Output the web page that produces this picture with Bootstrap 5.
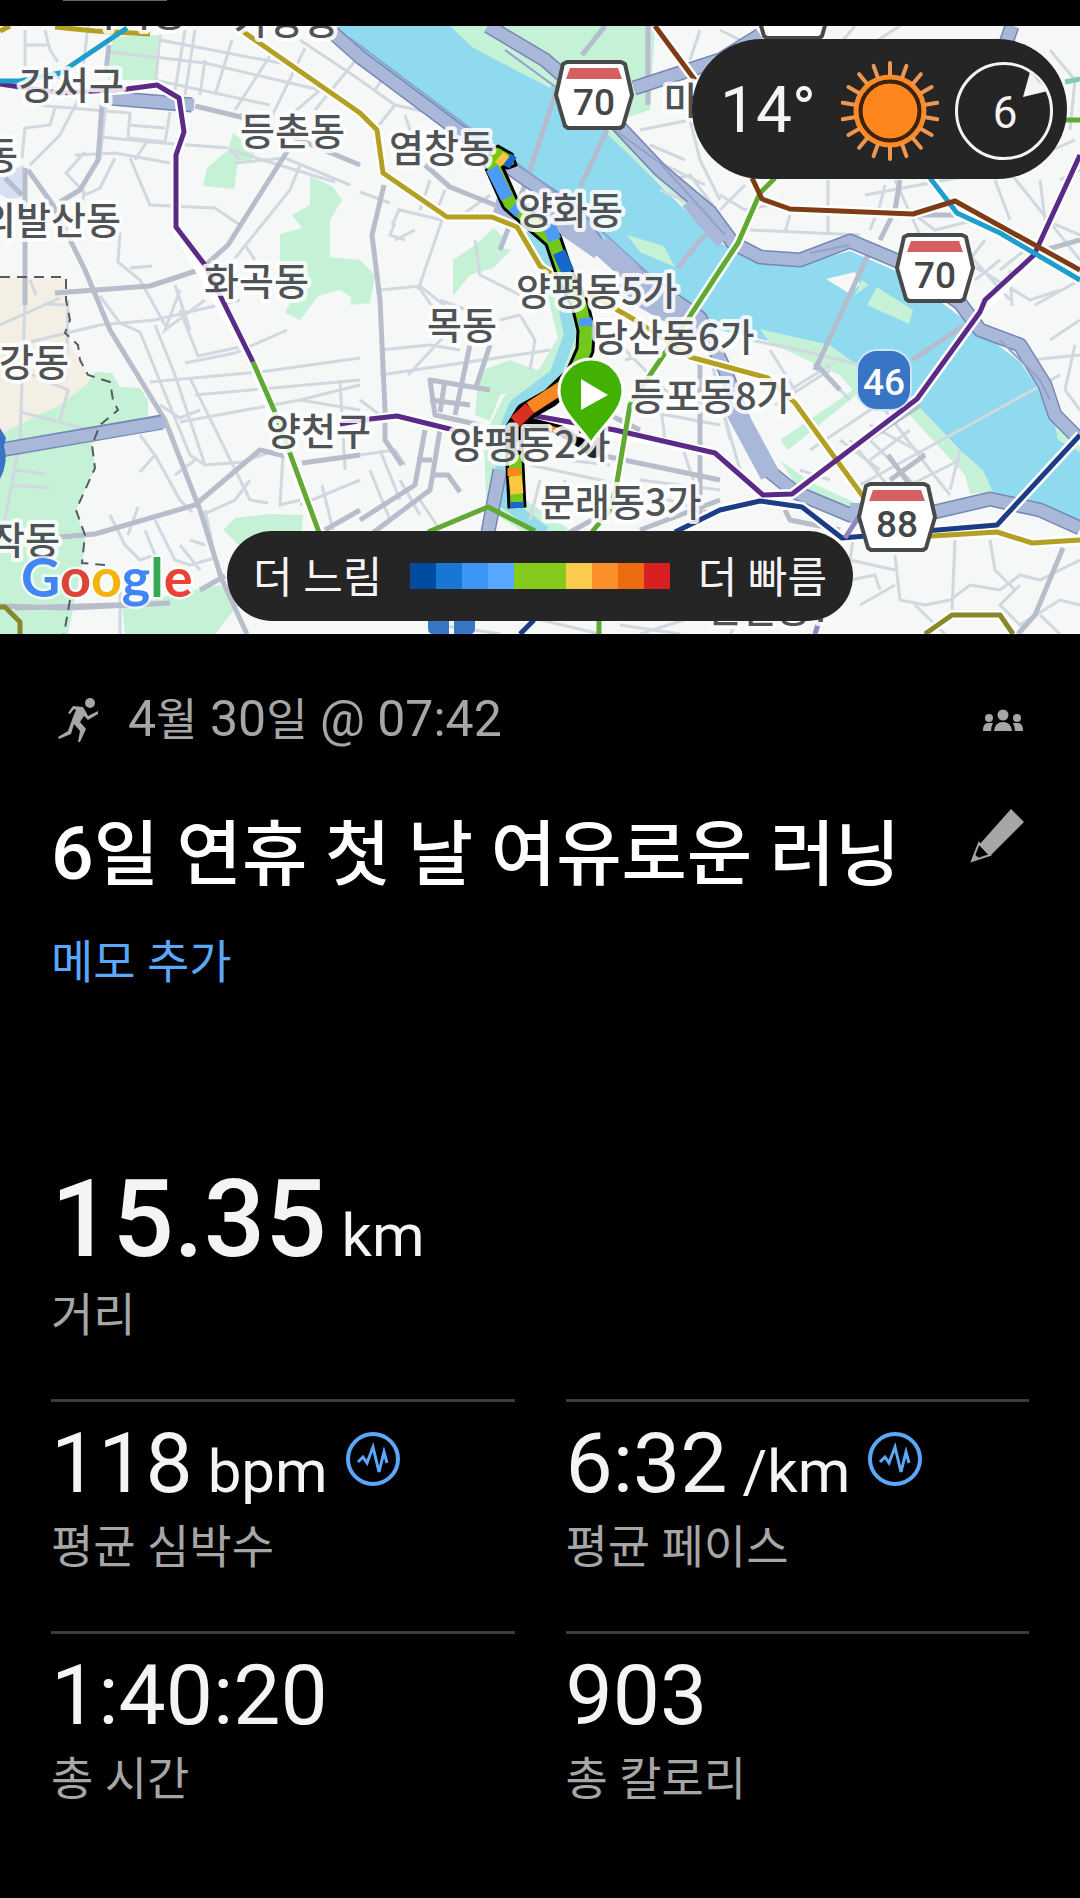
<!DOCTYPE html>
<html lang="ko" data-bs-theme="dark">
<head>
<meta charset="utf-8">
<meta name="viewport" content="width=device-width, initial-scale=1">
<title>6일 연휴 첫 날 여유로운 러닝</title>
<link href="https://cdn.jsdelivr.net/npm/bootstrap@5.3.0/dist/css/bootstrap.min.css" rel="stylesheet">
<style>
  body { background: #000; color: #f4f4f4; font-family: Roboto, "Noto Sans CJK KR", sans-serif; }
  .top-strip { height: 26px; padding-left: 63px; }
  .top-strip i { display: block; width: 104px; height: 1px; background: #666; }
  .map-area { height: 608px; overflow: hidden; }
  .map-area > svg { width: 100%; height: 100%; }
  .pill { position: absolute; background: #252525; border-radius: 70px; }
  .weather { top: 13px; right: 13px; width: 375px; height: 140px; padding: 4px 14px 0 28px; }
  .temp { font-size: 64px; line-height: 80px; }
  .legend { left: 50%; bottom: 13px; width: 626px; height: 90px; transform: translateX(-50%); font-size: 43px; line-height: 60px; padding: 0 26px; }
  .legend span { padding-top: 4px; }
  .scale-bar { width: 260px; height: 26px; }
  .scale-bar i { flex: 1; }
  .s1 { background: #004a9f; } .s2 { background: #1976d2; } .s3 { background: #3d96f5; }
  .s4 { background: #57a9ff; } .s5 { background: #84cb1e; } .s6 { background: #fccb4d; }
  .s7 { background: #fb8f29; } .s8 { background: #ec6a10; } .s9 { background: #d82023; }
  .info { padding: 56px 51px 60px; }
  .date-row { height: 60px; font-size: 50px; line-height: 60px; color: #a6a6a6; padding: 0 5px 0 7px; }
  .ko-date { font-size: 45px; }
  .title-row { margin-top: 59px; }
  .title-row h1 { font-size: 71px; line-height: 84px; font-weight: 500; margin: 0; padding-top: 4px; }
  .title-num { font-size: 75px; line-height: 1px; }
  .icon-btn { background: none; border: 0; padding: 0; line-height: 0; color: #a6a6a6; }
  .memo { display: inline-block; margin-top: 38px; font-size: 46px; line-height: 54px; color: #5ba7fa; text-decoration: none; }
  .total { margin-top: 175px; }
  .big-value { font-size: 108px; line-height: 110px; font-weight: 500; }
  .value { font-size: 84px; line-height: 84px; }
  .unit { font-size: 60px; line-height: 1px; font-weight: 400; margin-left: 15px; }
  .caption { margin-top: 14px; font-size: 46px; line-height: 54px; color: #a6a6a6; }
  .stats { --bs-gutter-x: 51px; margin-top: 57px; }
  .stat { border-top: 3px solid #3c3c3c; padding: 20px 0 57px; }
  .stat-icon { margin: 10px 0 0 18px; }
</style>
<script src="https://cdn.jsdelivr.net/npm/bootstrap@5.3.0/dist/js/bootstrap.bundle.min.js"></script>
</head>
<body>
<div class="top-strip"><i></i></div>

<section class="map-area position-relative">
<svg viewBox="0 26 1080 608" preserveAspectRatio="xMidYMid slice" role="img" aria-label="지도">
  <defs>
    <g id="shield">
      <path d="M-27-33H27L31-31 38 0 29 31 26 33H-26L-29 31-38 0-31-31Z" fill="#fff" stroke="#484a4a" stroke-width="4" stroke-linejoin="round"/>
      <path d="M-24-27H24L28-16H-28Z" fill="#d65f62"/>
    </g>
  </defs>
  <rect y="26" width="1080" height="608" fill="#f6f7f7"/>
  <!-- district in the west -->
  <path d="M0 278H66L70 345 88 373 88 395 0 434Z" fill="#f4efe5"/>
  <path d="M0 175 24 165 27 195 10 200 0 194Z" fill="#d7e0f3"/>
  <!-- parks -->
  <g fill="#c5f1d7">
    <path d="M0 434 60 405 86 385 95 372 112 373 120 387 140 388 148 400V416L100 428 92 445 95 468 76 510 85 540 82 565 68 634H0Z"/>
    <path d="M113 37 158 35 155 80 108 80Z"/>
    <path d="M233 133 256 150 251 163 238 160 234 189 203 186 207 168 228 150Z"/>
    <path d="M310 176 333 187 342 200 330 220V257L360 260V303L340 290 318 296 300 320 285 313 290 303 280 290V234L302 228 292 215 310 205Z"/>
    <path d="M360 260 375 275 370 303 350 305Z"/>
    <path d="M494 228 504 238 502 248 511 250 493 268 470 275 453 296V260L475 245Z"/>
    <path d="M483 370 510 360 545 373 545 382 500 395 490 421 475 415 478 385Z"/>
    <path d="M223 530 235 518 270 514 303 515 302 531 240 546Z"/>
    <path d="M122 605 220 585 238 605 215 634H125Z"/>
    <path d="M440 26H655L650 110 620 120 555 85 500 65 475 50Z"/>
  </g>
  <!-- streams -->
  <g fill="none" stroke="#93dbe9" stroke-linejoin="round">
    <path stroke="#c5f1d7" stroke-width="28" d="M540 235 563 300 573 340 550 378 515 405 498 440 500 500 560 540"/>
    <path stroke-width="12" d="M530 230 560 285 570 335 555 375 515 405 501 440 502 500 545 532"/>
  </g>
  <!-- Han river -->
  <path d="M333 26H455L475 45 550 82 605 130 655 180 715 240 755 262 795 266 850 251 905 275 962 318 985 335 1020 362 1050 405 1058 430 1080 450V525L1040 505 990 492 960 450 920 408 860 375 790 345 740 335 700 325 640 285 600 250 575 215 520 175 440 115 360 58Z" fill="#8fdaee"/>
  <g fill="#c5f1d7">
    <path d="M595 232 650 278 700 318 680 325 640 290 600 255Z"/>
    <path d="M627 235 664 246 675 267 640 252Z"/>
    <path d="M877 287 913 310 909 324 867 305Z"/>
    <path d="M862 280 869 285 855 295Z"/>
    <path d="M450 26H500L560 66 550 88 500 62 472 47Z"/>
    <path d="M605 132 612 130 700 215 715 235Z"/>
    <path d="M760 329 830 345 857 365 856 395 788 450 780 440 853 390 840 375 770 343Z"/>
    <path d="M912 400 960 450 983 470 993 492 970 494 965 475 905 410Z"/>
    <path d="M780 460 810 482 860 505 900 500 860 517 800 492Z"/>
    <path d="M1052 412 1062 432 1080 446V452L1058 440Z"/>
  </g>
  <path d="M826 279 855 272 860 284 850 294Z" fill="#f6f7f7"/>
  <!-- minor streets -->
  <g fill="none" stroke="#d2d8e0" stroke-width="3">
    <path d="M25 30V68L60 78M25 45H48M45 30 50 50 58 62M107 95 100 160M88 26 80 95M160 35 155 90M110 52 205 63 320 90M155 80 270 105M185 30 175 90M195 30 185 95M205 60 200 95M232 40 215 95M275 48 235 110M305 48 270 120M320 90 285 120M160 40 290 65 345 100M300 40 360 80M360 55 315 110"/>
    <path d="M35 105 130 113 128 138 165 142 170 112M128 125 165 128M78 100 60 135 30 165M55 108 50 125 25 128 22 158M102 137 150 142 228 148M148 140 135 160M75 155 115 153 170 163M85 152 66 173 84 192 82 208M130 158 150 205 215 208 240 225M115 158 100 188 85 195M235 163 285 158 350 185M300 165 290 190 235 258M240 160 230 150 335 182M120 232 118 262 140 280 165 325M130 268 152 266M180 290 165 330 205 300M175 285 190 330M245 245 255 260"/>
    <path d="M0 325 60 298M30 280 36 295M25 300 20 440 5 520M22 370 68 390 60 420M45 304 65 305M20 412 90 430M68 300 66 380M15 470 45 474M10 485 50 488M30 342 100 325 155 320 240 300"/>
    <path d="M100 296 120 323 140 332 190 455 205 465M155 325 175 375 205 465 245 462M180 310 198 356 240 347M150 382 260 372 360 358M190 378 250 500 268 503M185 363 235 353 287 330M195 395 360 380M180 422 300 400 360 385M300 400 360 410M340 380 345 470M240 463 290 445M160 405 180 418 200 410M140 435 155 455 140 472M155 455 180 500 192 512M175 475 195 460M110 515 125 545 140 560 155 555 145 530M138 507 128 535M155 520 175 560 190 565 215 558M180 545 200 570M190 540 205 545M200 516 235 500 250 480M205 510 220 580M283 455 280 505 300 500M322 485 333 530M300 505 360 480"/>
    <path d="M360 80 395 105 440 115M375 90 385 75M395 105 375 130M405 115 410 130M430 180 420 210M445 190 435 215M400 210 442 220 418 290M392 225 400 208M395 240 415 230M395 223 390 235 405 240M380 290 420 286 450 310M360 192 390 203M490 195 455 220M475 240 480 275 520 295M418 286 445 325M380 350 430 345 460 350M380 375 550 350M450 330 408 375M440 300 480 315"/>
    <path d="M520 315 535 340 530 370M500 320 520 315M360 400 380 415M360 455 395 450 405 465M370 470 390 520M380 450 400 500M400 480 420 515M420 500 440 530M530 465 600 480 720 515M520 455 610 465M540 480 530 520M565 480 560 500M640 410 720 425M620 345 680 405M625 360 660 350M640 480 720 490M660 400 665 440M710 355 730 440M680 440 700 500M720 400 740 470 760 490"/>
    <path d="M640 130 690 120 700 160 720 200M650 145 685 160M655 160 705 185M660 190 720 215M670 180 690 175 720 215M700 30 690 60M720 30 740 40M870 45 900 26M835 50 855 26"/>
    <path d="M720 195 745 210 770 205M745 185 720 210M790 215 785 232M828 180V235M885 185 880 205 870 230M750 230 860 235M895 180 920 235M865 195 1000 170M930 240 1030 300 1060 290M915 215 935 230 975 220M995 180 1010 220M1000 160 1080 260M1040 180 1045 220 1080 235M965 250 1010 300M975 280 1000 260M985 240 950 285M1010 270 1012 306M1025 250 1000 270M1035 305 1080 280M1050 50 1075 80 1070 130M1075 140 1030 160M1060 180 1080 170M1035 90 1050 100M1050 340 1080 320M1030 360 1080 355M1075 345 1065 390 1080 410"/>
    <path d="M750 340 800 350 860 365M790 390 830 365M815 364 850 400M775 405 830 370M770 350 795 390M810 450 885 400M835 465 900 415M860 485 960 430 1060 375M880 500 960 460M850 440 900 500M885 410 930 470 950 495M800 470 830 480M870 440 920 490M870 425 925 455M840 440 880 470M910 430 870 460M960 450 950 490"/>
    <path d="M853 540 850 560 895 570M895 555 900 600 925 605 950 600 970 585 1000 590 1020 575 1040 580 1080 560M955 540 952 610M990 540 995 570 1015 590M860 605 895 585M840 540 870 530M1020 585 1000 605 1020 625 1060 600 1080 605M1040 615 1060 634M850 580 875 575 880 590M915 605 945 634M900 520 920 550"/>
    <path d="M120 592V634M250 590 260 615M360 540 380 530M440 625 500 634M500 610 600 634M620 625 680 634M640 634 700 615M730 634 740 620"/>
  </g>
  <!-- main streets -->
  <g fill="none" stroke="#b7bdcb" stroke-width="5" stroke-linejoin="round">
    <path d="M102 105 98 160 80 190 60 202M109 45 106 72M195 106 245 118M240 115 360 165M288 150 228 245 200 270M25 168V305M5 178 22 195"/>
    <path d="M28 170 53 205 85 270 110 330 165 420 200 510M205 268 150 286 55 293M60 537 95 534 195 505 260 450 285 456M302 463 360 455"/>
    <path d="M200 510 222 580 247 634M200 590 225 576M0 606 70 608 170 603M325 530 360 510M15 608 150 604"/>
    <path d="M384 185 372 235 380 300 385 410M385 410 385 440 402 465 M425 165 450 187 495 205M600 455 720 480M640 430 600 410M700 355V520M640 530 720 500M565 535 610 510"/>
    <path d="M480 425 435 415 430 380 490 390M470 345 455 415M490 345 475 390M445 380 440 412M430 400 470 405M425 430 415 485 360 520M440 430 430 490 370 535M417 460H432M433 475H448L460 492"/>
    <path d="M900 180 895 210 880 240M648 26V105M920 215 960 215M1045 250 1080 240M815 363 840 390M1063 548 1035 615 1018 634M785 510 790 520 840 530M845 455 920 405M888 455 910 485M925 455 890 480"/>
    <path stroke="#b5bccd" d="M560 80 525 185 500 250M607 130 580 187M868 255 815 370M912 360 965 325M678 268 700 240 715 228M605 26 582 55"/>
  </g>
  <!-- expressways -->
  <g fill="none" stroke-linejoin="round" stroke-linecap="butt">
    <g stroke="#7588b5" stroke-width="15">
      <path d="M333 33 360 57 455 128 520 175 575 212 600 248 645 280 700 318 725 370 745 425 770 472 795 492 850 515 930 513 990 499 1040 510 1080 528M488 26 545 60 610 117 660 170 710 212 733 243 760 257 800 260 850 241 900 262 960 303 980 330 1020 345 1045 385 1055 415 1080 440M634 88 720 60 760 35M1012 26 1000 60M500 470 488 532"/>
      <path d="M0 450 162 422M110 98 192 105"/>
    </g>
    <g stroke="#a9b8d8" stroke-width="12">
      <path d="M333 33 360 57 455 128 520 175 575 212 600 248 645 280 700 318 725 370 745 425 770 472 795 492 850 515 930 513 990 499 1040 510 1080 528M488 26 545 60 610 117 660 170 710 212 733 243 760 257 800 260 850 241 900 262 960 303 980 330 1020 345 1045 385 1055 415 1080 440M634 88 720 60 760 35M1012 26 1000 60M500 470 488 532"/>
      <path d="M0 450 165 422M108 98 194 105"/>
    </g>
    <path stroke="#a9b8d8" stroke-width="20" d="M495 205 560 222 600 250M600 245 660 300M690 200 725 240M735 410 770 475M620 285 700 330M850 513 920 513"/>
    <path stroke="#91a3ca" stroke-width="2" d="M350 38 575 207 650 275M505 50 660 163 725 235M810 253 850 245M1000 340 1040 380 1050 400"/>
  </g>
  <path d="M0 277H66L66 300 70 320 65 333 78 345 80 360 88 375 110 382 113 400 118 410 100 425 92 445 95 468 76 510 85 535 82 563 105 565M70 600 64 634" fill="none" stroke="#555b60" stroke-width="2" stroke-dasharray="10 7"/>
  <!-- subway: white casing, then line colours -->
  <g fill="none" stroke="#fff" stroke-width="10" stroke-linejoin="round">
    <path d="M235 26 360 113 377 130 383 173 447 217H492L517 227 540 266 553 275M615 308 690 357 768 378 795 403 862 495M930 537 997 532 1032 543 1080 540M60 93 127 89 157 85 179 98 184 132 176 155V227L253 362 320 535M340 424 397 416 470 434M530 415 715 453 763 495 792 494 917 399 980 312 1034 255 1080 155M775 178 760 193 738 243 690 316 630 405 617 482 592 532M752 178 762 199 790 209 913 214 955 201 1080 270M930 178 957 213 1000 233 1080 280M675 532 720 510 760 501 802 507 842 538 997 525 1080 435M655 26 695 80M925 634 952 615H1000L1013 634"/>
  </g>
  <g fill="none" stroke-width="5" stroke-linejoin="round">
    <path stroke="#b3a023" d="M0 31 10 26M55 27 95 31 150 34M235 26 360 113 377 130 383 173 447 217H492L517 227 540 266 553 275M560 277 635 320 690 357 720 365 768 378 795 403 862 495 900 538 997 532 1032 543 1080 540"/>
    <path stroke="#5b2a86" d="M0 84 60 93 127 89 157 85 179 98 184 132 176 155V227L205 265 253 362M340 424 370 419 397 416 470 434M530 415 615 430 715 453 763 495 792 494 917 399 980 312 985 300 1034 255 1080 155"/>
    <path stroke="#60aa33" d="M253 362 274 410 320 535M775 178 760 193 738 243 720 270 690 316 650 375 630 405 617 482 610 510 592 532M599 620V634M428 532 488 507 535 531M1065 120H1080"/>
    <path stroke="#7fceb0" d="M820 58 850 67M1065 82 1080 79"/>
    <path stroke="#1d9ecb" d="M0 81 20 81 60 73 127 28M930 178 957 213 1000 233 1080 280"/>
    <path stroke="#7d3c14" d="M655 26 695 80M752 178 762 199 790 209 913 214 955 201 1080 270"/>
    <path stroke="#1c3c86" d="M675 532 720 510 760 501 802 507 842 538 997 525 1080 435M534 620 520 634"/>
    <path stroke="#9385c4" d="M845 538 860 515M820 618 815 634"/>
    <path stroke="#87882b" d="M925 634 952 615H1000L1013 634M0 607H5L20 622V634"/>
  </g>
  <!-- running route coloured by pace -->
  <g fill="none" stroke-linejoin="round">
    <path stroke="#000" stroke-width="19" d="M490 158 510 203 553 240 565 275 580 305 586 330 585 350 574 375 550 398 525 412 514 430 515 465 517 508"/>
    <path d="M490 150 498 146 512 154 516 165 508 168 490 164Z" fill="#73c81c" stroke="#000" stroke-width="3"/>
    <path stroke="#000" stroke-width="10" d="M528 422 560 430 592 450"/>
    <g stroke-width="13">
      <path stroke="#73c81c" d="M489 157 510 203 553 240 565 275 580 305 586 330 585 350 574 375 561 388M515 455 517 508"/>
      <path stroke="#4d9bf7" d="M492 168 507 198M513 206 520 212M549 225 555 240M585 318 586 326"/>
      <path stroke="#1767cc" d="M559 252 568 272M507 159 513 163M517 502V508"/>
      <path stroke="#f98720" d="M561 388 530 408M514 468V476"/>
      <path stroke="#d93024" d="M530 408 515 422"/>
      <path stroke="#fbc741" d="M499 157 505 162M515 476 517 494"/>
    </g>
    <path stroke="#f98720" stroke-width="5" d="M548 427 560 431"/>
  </g>
  <circle cx="594" cy="447" r="11" fill="#202a30"/>
  <!-- road shields -->
  <g font-family="Roboto, sans-serif" font-weight="500" font-size="37" fill="#444748" text-anchor="middle">
    <use href="#shield" x="594" y="95"/><text x="594" y="115">70</text>
    <use href="#shield" x="935" y="268"/><text x="935" y="288">70</text>
    <use href="#shield" x="897" y="517"/><text x="897" y="537">88</text>
    <use href="#shield" x="793" y="5"/>
    <rect x="857" y="350" width="54" height="60" rx="20" fill="#3975c5" stroke="#cfe3fb" stroke-width="2"/>
    <text x="884" y="395" fill="#fff">46</text>
    <path d="M0 428 6 438 4 446Q9 462 0 479Z" fill="#3975c5"/>
    <path d="M428 615H449V634H433Q428 634 428 628ZM454 615H475V628Q475 634 470 634H454Z" fill="#3975c5"/>
  </g>
  <!-- place names -->
  <g font-family="'Noto Sans CJK KR', sans-serif" font-weight="500" font-size="38" fill="#505356" stroke="#fff" stroke-width="8" stroke-opacity=".85" stroke-linejoin="round" paint-order="stroke">
    <text x="82" y="26">마곡동</text><text x="234" y="34">가양동</text>
    <text x="19" y="99">강서구</text><text x="240" y="145">등촌동</text><text x="389" y="162">염창동</text>
    <text x="518" y="224">양화동</text><text x="-17" y="169">동</text><text x="-19" y="234">외발산동</text>
    <text x="204" y="295">화곡동</text><text x="516" y="305">양평동5가</text><text x="427" y="339">목동</text>
    <text x="593" y="351">당산동6가</text><text x="630" y="410">등포동8가</text><text x="266" y="445">양천구</text>
    <text x="449" y="458">양평동2가</text><text x="540" y="516">문래동3가</text><text x="-1" y="376">강동</text>
    <text x="-10" y="554">작동</text><text x="664" y="114">마</text><text x="706" y="622">신길동7</text>
  </g>
  <!-- start pin -->
  <path d="M591 444C584 430 559 412 559 391A32 32 0 0 1 623 391C623 412 598 430 591 444Z" fill="#43b102" stroke="#fff" stroke-width="3"/>
  <path d="M581 379V410L608 395Z" fill="#fff"/>
  <text x="21" y="597" font-family="Lato, sans-serif" font-weight="700" font-size="54" stroke="#fff" stroke-width="5" stroke-opacity=".7" paint-order="stroke" fill="#4285f4">G<tspan fill="#db4437">o</tspan><tspan fill="#f4b410">o</tspan>g<tspan fill="#34a853">l</tspan><tspan fill="#ea4335">e</tspan></text>
</svg>

<div class="pill weather d-flex align-items-center justify-content-between">
  <span class="temp">14°</span>
  <div class="d-flex align-items-center gap-3">
    <svg width="98" height="100" viewBox="-49 -50 98 100" fill="none" stroke="#ff8a25" aria-label="맑음">
      <circle r="27.5" fill="#ff861c" stroke="none"/>
      <circle r="30" stroke="#3f220b" stroke-width="4"/>
      <circle r="34" stroke-width="5"/>
      <g stroke-width="4" stroke-linecap="round" stroke="#ef9650">
        <path id="ray" d="M0-36V-48M0 36V48"/>
        <use href="#ray" transform="rotate(20)"/><use href="#ray" transform="rotate(40)"/><use href="#ray" transform="rotate(60)"/><use href="#ray" transform="rotate(80)"/><use href="#ray" transform="rotate(100)"/><use href="#ray" transform="rotate(120)"/><use href="#ray" transform="rotate(140)"/><use href="#ray" transform="rotate(160)"/>
      </g>
    </svg>
    <svg width="98" height="98" viewBox="-49 -49 98 98" aria-label="바람 6">
      <circle r="47.5" fill="none" stroke="#f4f4f4" stroke-width="3"/>
      <path d="M26-39 44-20 19-14Z" fill="#f4f4f4"/>
      <text x="1" y="17" text-anchor="middle" font-size="44" fill="#f4f4f4" font-family="Roboto, sans-serif">6</text>
    </svg>
  </div>
</div>

<div class="pill legend d-flex align-items-center justify-content-between">
  <span>더 느림</span>
  <div class="scale-bar d-flex">
    <i class="s1"></i><i class="s2"></i><i class="s3"></i><i class="s4"></i><i class="s5"></i><i class="s5"></i><i class="s6"></i><i class="s7"></i><i class="s8"></i><i class="s9"></i>
  </div>
  <span>더 빠름</span>
</div>
</section>

<main class="info">
  <div class="date-row d-flex align-items-center">
    <svg width="42" height="44" viewBox="0 0 42 44" fill="#a6a6a6" aria-hidden="true">
      <circle cx="32" cy="5" r="5"/>
      <path d="M10 15 15 8 25 9 28 14 30 18 40 13V16L30 22 26 18 22 24 28 31 22 44H20L22 33 16 26 13 36 1 41 0 39 10 33 15 19 18 12 16 11 12 16Z"/>
    </svg>
    <span class="ms-4 ps-1">4<span class="ko-date">월</span> 30<span class="ko-date">일</span> @ 07:42</span>
    <svg class="ms-auto" width="42" height="23" viewBox="0 0 42 23" fill="#a6a6a6" aria-label="그룹">
      <circle cx="21" cy="6" r="5.5"/><circle cx="7" cy="9" r="4"/><circle cx="35" cy="9" r="4"/>
      <path d="M12 22Q13 13 21 13T30 22ZM1 22Q1 14 6 14H11Q9 18 9 22ZM41 22Q41 14 36 14H31Q33 18 33 22Z"/>
    </svg>
  </div>

  <div class="title-row d-flex justify-content-between align-items-start">
    <h1><span class="title-num">6</span>일 연휴 첫 날 여유로운 러닝</h1>
    <button type="button" class="icon-btn me-1" aria-label="제목 편집">
      <svg width="55" height="54" viewBox="0 0 55 54"><path d="M41 0 54 13 20 47 9 36Z" fill="currentColor"/><path d="M9 34 2 52 20 46Z" fill="none" stroke="currentColor" stroke-width="2"/><path d="M2 53 4 45 9 49Z" fill="currentColor"/></svg>
    </button>
  </div>
  <a href="#memo" class="memo">메모 추가</a>

  <div class="total">
    <div class="big-value">15.35<span class="unit">km</span></div>
    <div class="caption">거리</div>
  </div>

  <div class="row stats">
    <div class="col-6"><div class="stat">
      <div class="value d-flex"><span>118<span class="unit">bpm</span></span>
        <svg class="stat-icon" width="54" height="54" viewBox="0 0 54 54" fill="none" stroke="#5ba7fa"><circle cx="27" cy="27" r="25" stroke-width="4"/><path d="M12 30 17 25 21 31 27 15 33 40 38 20 41 31" stroke-width="3"/></svg></div>
      <div class="caption">평균 심박수</div>
    </div></div>
    <div class="col-6"><div class="stat">
      <div class="value d-flex"><span>6:32<span class="unit">/km</span></span>
        <svg class="stat-icon" width="54" height="54" viewBox="0 0 54 54" fill="none" stroke="#5ba7fa"><circle cx="27" cy="27" r="25" stroke-width="4"/><path d="M12 30 17 25 21 31 27 15 33 40 38 20 41 31" stroke-width="3"/></svg></div>
      <div class="caption">평균 페이스</div>
    </div></div>
    <div class="col-6"><div class="stat">
      <div class="value">1:40:20</div>
      <div class="caption">총 시간</div>
    </div></div>
    <div class="col-6"><div class="stat">
      <div class="value">903</div>
      <div class="caption">총 칼로리</div>
    </div></div>
  </div>
</main>
</body>
</html>
